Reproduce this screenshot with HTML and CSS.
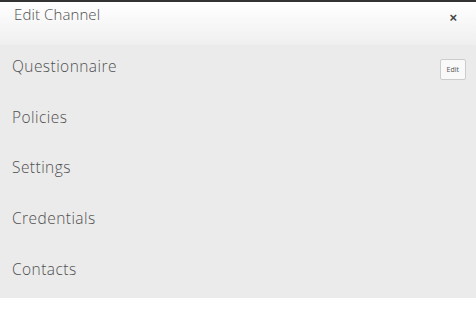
FILE: index.html
```html
<!DOCTYPE html>
<html lang="en">
<head>
  <meta charset="UTF-8">
  <title>Edit Channel</title>
  <link rel="stylesheet" href="styles.css">
</head>
<body>

<div class="modal">
  <div class="modal-header">
    <span class="modal-title">Edit Channel</span>
    <button class="close">&times;</button>
  </div>
  <ul class="section-list">
    <li class="section">
      <span>Questionnaire</span>
      <button class="edit-button">Edit</button>
    </li>
    <li class="section"><span>Policies</span></li>
    <li class="section"><span>Settings</span></li>
    <li class="section"><span>Credentials</span></li>
    <li class="section"><span>Contacts</span></li>
  </ul>
</div>

</body>
</html>
```

FILE: styles.css
```css
body {
  margin: 0;
  font-family: "Open Sans", Lato, sans-serif;
  font-weight: 300;
  background-color: #ffffff;
  color: #505050;
}

.modal {
  border-top: 2px solid #333333;
}

.modal-header {
  height: 43px;
  display: flex;
  justify-content: space-between;
  align-items: flex-start;
  padding: 0 14px;
  background: linear-gradient(#ffffff, #efefef);
}

.modal-title {
  font-size: 15px;
  line-height: 24px;
  letter-spacing: 0.1px;
}

.close {
  border: none;
  background: none;
  padding: 0;
  margin-top: 9px;
  margin-right: 5px;
  font-family: Arial, "Liberation Sans", sans-serif;
  font-size: 13px;
  font-weight: bold;
  line-height: 14px;
  color: #444444;
  cursor: pointer;
}

.section-list {
  list-style: none;
  margin: 0;
  padding: 0;
  background-color: #ebebeb;
}

.section {
  height: 50.7px;
  box-sizing: border-box;
  padding: 11px 10px 0 12px;
  display: flex;
  justify-content: space-between;
  align-items: flex-start;
  font-size: 15.5px;
  line-height: 20px;
  letter-spacing: 0.45px;
}

.edit-button {
  margin-top: 3px;
  height: 21px;
  padding: 0 6px;
  font-family: inherit;
  font-weight: 400;
  font-size: 7px;
  letter-spacing: 0;
  color: #555555;
  background-color: #f9f9f9;
  border: 1px solid #cccccc;
  border-radius: 2px;
  cursor: pointer;
}
```
